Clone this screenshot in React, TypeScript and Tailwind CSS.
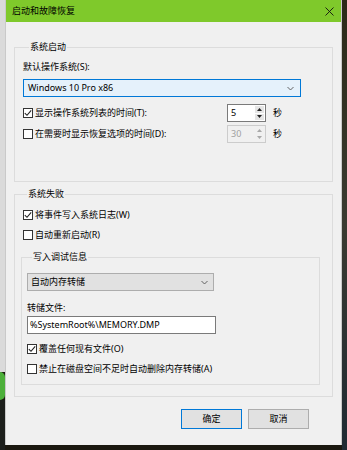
import React from "react";

const FONT = { fontFamily: '"Noto Sans", "Noto Sans CJK SC", sans-serif' };

function Check({ checked }: { checked?: boolean }) {
    return (
        <span className="w-[10px] h-[10px] border border-[#333333] bg-white flex items-center justify-center shrink-0">
            {checked ? (
                <svg width="8" height="8" viewBox="0 0 8 8">
                    <path d="M0.8 4.2 L3 6.3 L7.2 1.3" fill="none" stroke="#222" strokeWidth="1.1" />
                </svg>
            ) : null}
        </span>
    );
}

function CheckRow({ label, checked }: { label: string; checked?: boolean }) {
    return (
        <div className="flex items-center gap-[2px] h-[12px]">
            <Check checked={checked} />
            <span>{label}</span>
        </div>
    );
}

function Chevron() {
    return (
        <svg width="7" height="5" viewBox="0 0 7 5">
            <path d="M0.5 1 L3.5 4 L6.5 1" fill="none" stroke="#555" strokeWidth="0.9" />
        </svg>
    );
}

function Spinner({ value, disabled }: { value: string; disabled?: boolean }) {
    const arrow = disabled ? "#a8a8a8" : "#222";
    return (
        <div
            className={
                "w-[39px] h-[18px] flex border " +
                (disabled ? "border-[#cccccc] bg-[#f0f0f0] text-[#a0a0a0]" : "border-[#7a7a7a] bg-white text-black")
            }
        >
            <div className="flex-1 pl-[3px] flex items-center">{value}</div>
            <div className="w-[10px] flex flex-col gap-[1px] py-[1px] pr-[1px]">
                <div className={"flex-1 flex items-center justify-center " + (disabled ? "bg-[#f0f0f0]" : "bg-[#e5e5e5]")}>
                    <svg width="5" height="3" viewBox="0 0 5 3">
                        <path d="M0 3 L2.5 0 L5 3 Z" fill={arrow} />
                    </svg>
                </div>
                <div className={"flex-1 flex items-center justify-center " + (disabled ? "bg-[#f0f0f0]" : "bg-[#e5e5e5]")}>
                    <svg width="5" height="3" viewBox="0 0 5 3">
                        <path d="M0 0 L5 0 L2.5 3 Z" fill={arrow} />
                    </svg>
                </div>
            </div>
        </div>
    );
}

export default function App() {
    return (
        <div className="w-[347px] h-[450px] flex overflow-hidden bg-[#1b1810] text-[9px] leading-[12px] text-black" style={FONT}>
            {/* desktop strip on the left */}
            <div className="w-[5px] flex flex-col">
                <div className="h-[372px] bg-[#dadada]" />
                <div className="h-[28px] bg-[#4caf3a] rounded-r-full" />
                <div className="flex-1 bg-[#1d1f1c]" />
            </div>

            {/* dialog */}
            <div className="w-[337px] h-[445px] flex flex-col bg-[#f0f0f0] border-x border-[#c9c9c9]">
                <div className="h-[22px] bg-[#7fc92b] flex items-center justify-between pl-[6px] pr-[7px]">
                    <span>启动和故障恢复</span>
                    <svg width="9" height="9" viewBox="0 0 9 9">
                        <path d="M0.5 0.5 L8.5 8.5 M8.5 0.5 L0.5 8.5" stroke="#111" strokeWidth="0.9" />
                    </svg>
                </div>

                <div className="flex flex-col px-[8px]">
                    {/* 系统启动 */}
                    <fieldset className="mt-[19px] border border-[#dcdcdc] pl-[8px] pr-[8px] pb-[38px]">
                        <legend className="ml-[6px] px-[1px]">系统启动</legend>
                        <div className="mt-[8px]">默认操作系统(S):</div>
                        <div className="mt-[6px] w-[278px] h-[18px] border border-[#0078d7] bg-[#e5f1fb] flex items-center justify-between pl-[4px] pr-[6px]">
                            <span>Windows 10 Pro x86</span>
                            <Chevron />
                        </div>
                        <div className="mt-[7px] h-[18px] flex items-center">
                            <div className="w-[204px]">
                                <CheckRow label="显示操作系统列表的时间(T):" checked />
                            </div>
                            <Spinner value="5" />
                            <span className="ml-[7px]">秒</span>
                        </div>
                        <div className="mt-[3px] h-[18px] flex items-center">
                            <div className="w-[204px]">
                                <CheckRow label="在需要时显示恢复选项的时间(D):" />
                            </div>
                            <Spinner value="30" disabled />
                            <span className="ml-[7px]">秒</span>
                        </div>
                    </fieldset>

                    {/* 系统失败 */}
                    <fieldset className="mt-[6px] border border-[#dcdcdc] pl-[6px] pr-[12px] pb-[11px]">
                        <legend className="ml-[6px] px-[1px]">系统失败</legend>
                        <div className="mt-[9px] pl-[2px]">
                            <CheckRow label="将事件写入系统日志(W)" checked />
                        </div>
                        <div className="mt-[8px] pl-[2px]">
                            <CheckRow label="自动重新启动(R)" />
                        </div>

                        <fieldset className="mt-[10px] border border-[#dcdcdc] pl-[5px] pb-[9px]">
                            <legend className="ml-[5px] px-[1px]">写入调试信息</legend>
                            <div className="mt-[10px] w-[187px] h-[18px] border border-[#adadad] bg-[#e1e1e1] flex items-center justify-between pl-[3px] pr-[5px]">
                                <span>自动内存转储</span>
                                <Chevron />
                            </div>
                            <div className="mt-[11px]">转储文件:</div>
                            <div className="mt-[2px] w-[189px] h-[18px] border border-[#7a7a7a] bg-white flex items-center pl-[2px]">
                                %SystemRoot%\MEMORY.DMP
                            </div>
                            <div className="mt-[9px]">
                                <CheckRow label="覆盖任何现有文件(O)" checked />
                            </div>
                            <div className="mt-[8px]">
                                <CheckRow label="禁止在磁盘空间不足时自动删除内存转储(A)" />
                            </div>
                        </fieldset>
                    </fieldset>

                    <div className="mt-[12px] flex justify-end gap-[6px] pr-[24px]">
                        <button className="w-[61px] h-[20px] border border-[#0078d7] bg-[#e1e1e1]">确定</button>
                        <button className="w-[61px] h-[20px] border border-[#adadad] bg-[#e1e1e1]">取消</button>
                    </div>
                </div>
            </div>

            {/* desktop strip on the right */}
            <div className="flex-1 bg-gradient-to-b from-[#2c2a18] via-[#3a3a30] to-[#1f2a33]" />
        </div>
    );
}
